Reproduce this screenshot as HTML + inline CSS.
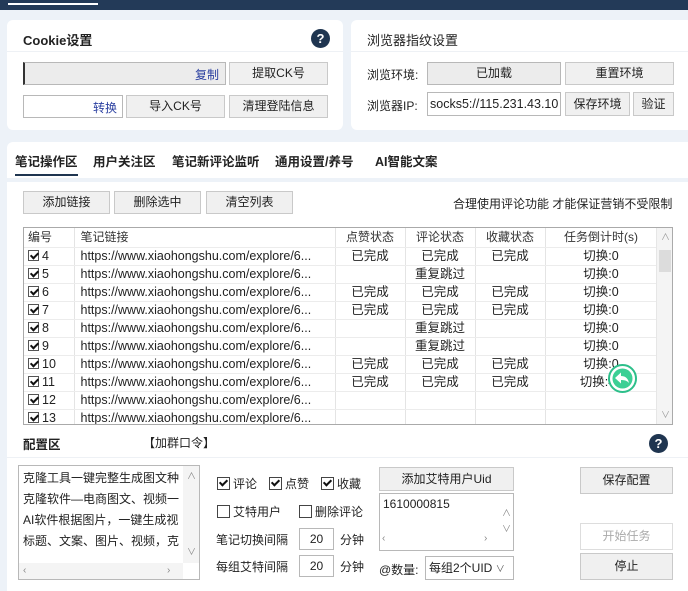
<!DOCTYPE html>
<html><head><meta charset="utf-8"><style>
*{box-sizing:border-box;margin:0;padding:0}
body{width:688px;height:591px;overflow:hidden;background:#edf2f8;font-family:"Liberation Sans","Noto Sans CJK SC",sans-serif;font-size:12px;color:#222;position:relative}
.a{position:absolute}
.panel{position:absolute;background:#fff;border-radius:6px}
.btn{position:absolute;background:#f0f0f0;border:1px solid #c9c9c9;text-align:center;font-size:12px;color:#222}
.inp{position:absolute;background:#fff;border:1px solid #b8b8b8;font-size:12px}
.hd{font-weight:bold;font-size:13px;color:#222}
.q{position:absolute;width:19px;height:19px;border-radius:50%;background:#1f3550;color:#fff;font-weight:bold;font-size:13px;text-align:center;line-height:19px}
table{border-collapse:collapse;font-size:12.5px}
td{height:18px;line-height:16px;border-right:1px solid #e4e4e4;border-bottom:1px solid #ececec;white-space:nowrap;overflow:hidden;text-align:center;padding:0}
.cb{display:inline-block;width:11px;height:11px;border:1px solid #555;background:#fff;vertical-align:-1px;position:relative;margin-right:3px}
.cb.k::after{content:"";position:absolute;left:3px;top:0;width:3px;height:6px;border:solid #111;border-width:0 2px 2px 0;transform:rotate(45deg)}
.ck{position:absolute;font-size:12px}
.ck .cb{width:13px;height:13px;border-color:#444;vertical-align:-2px}
</style></head><body>
<div class="a" style="left:0;top:0;width:688px;height:10px;background:#233a58"></div>
<div class="a" style="left:8px;top:3px;width:90px;height:2px;background:#fff"></div>

<div class="panel" style="left:7px;top:20px;width:336px;height:110px">
 <div class="a hd" style="left:16px;top:10px">Cookie设置</div>
 <div class="a" style="left:0;top:31px;width:336px;height:1px;background:#eef1f5"></div>
</div>
<div class="q" style="left:311px;top:29px">?</div>
<div class="inp" style="left:23px;top:62px;width:203px;height:23px;background:#ececec;border-left:2px solid #333"><span class="a" style="right:6px;top:3px;color:#2a3fa0">复制</span></div>
<div class="btn" style="left:229px;top:62px;width:99px;height:23px;line-height:21px">提取CK号</div>
<div class="inp" style="left:23px;top:95px;width:100px;height:23px"><span class="a" style="right:5px;top:3px;color:#2a3fa0">转换</span></div>
<div class="btn" style="left:126px;top:95px;width:99px;height:23px;line-height:21px">导入CK号</div>
<div class="btn" style="left:229px;top:95px;width:99px;height:23px;line-height:21px">清理登陆信息</div>

<div class="panel" style="left:351px;top:20px;width:345px;height:110px">
 <div class="a hd" style="left:16px;top:10px;font-weight:normal">浏览器指纹设置</div>
 <div class="a" style="left:0;top:31px;width:345px;height:1px;background:#eef1f5"></div>
</div>
<div class="a" style="left:367px;top:66px">浏览环境:</div>
<div class="inp" style="left:427px;top:62px;width:134px;height:23px;background:#ececec;text-align:center;line-height:21px">已加载</div>
<div class="btn" style="left:565px;top:62px;width:109px;height:23px;line-height:21px">重置环境</div>
<div class="a" style="left:367px;top:97px">浏览器IP:</div>
<div class="inp" style="left:427px;top:92px;width:134px;height:24px;line-height:22px;padding-left:2px;overflow:hidden;white-space:nowrap;font-size:12.5px">socks5://115.231.43.10</div>
<div class="btn" style="left:565px;top:92px;width:65px;height:24px;line-height:22px">保存环境</div>
<div class="btn" style="left:633px;top:92px;width:41px;height:24px;line-height:22px">验证</div>

<div class="panel" style="left:7px;top:142px;width:690px;height:36px;border-radius:6px 6px 0 0">
 <div class="a hd" style="left:8px;top:9px;font-size:12.5px">笔记操作区</div>
 <div class="a hd" style="left:86px;top:9px;font-size:12.5px">用户关注区</div>
 <div class="a hd" style="left:165px;top:9px;font-size:12.5px">笔记新评论监听</div>
 <div class="a hd" style="left:268px;top:9px;font-size:12.5px">通用设置/养号</div>
 <div class="a hd" style="left:368px;top:9px;font-size:12.5px">AI智能文案</div>
 <div class="a" style="left:8px;top:32px;width:63px;height:2px;background:#1f3550"></div>
</div>
<div class="panel" style="left:7px;top:182px;width:690px;height:250px;border-radius:0"></div>
<div class="btn" style="left:23px;top:191px;width:87px;height:23px;line-height:21px">添加链接</div>
<div class="btn" style="left:114px;top:191px;width:87px;height:23px;line-height:21px">删除选中</div>
<div class="btn" style="left:206px;top:191px;width:87px;height:23px;line-height:21px">清空列表</div>
<div class="a" style="left:453px;top:195px">合理使用评论功能 才能保证营销不受限制</div>

<div class="a" style="left:23px;top:227px;width:650px;height:198px;border:1px solid #aaa;background:#fff;overflow:hidden">
<table style="width:633px;table-layout:fixed">
<colgroup><col style="width:50px"><col style="width:261px"><col style="width:70px"><col style="width:70px"><col style="width:70px"><col style="width:112px"></colgroup>
<tr style="color:#333;font-size:12px"><td style="text-align:left;padding-left:4px;height:19px">编号</td><td style="text-align:left;padding-left:6px">笔记链接</td><td>点赞状态</td><td>评论状态</td><td>收藏状态</td><td>任务倒计时(s)</td></tr>
<tr><td style="text-align:left;padding-left:4px"><span class="cb k"></span>4</td><td style="text-align:left;padding-left:6px">https://www.xiaohongshu.com/explore/6...</td><td>已完成</td><td>已完成</td><td>已完成</td><td>切换:0</td></tr>
<tr><td style="text-align:left;padding-left:4px"><span class="cb k"></span>5</td><td style="text-align:left;padding-left:6px">https://www.xiaohongshu.com/explore/6...</td><td></td><td>重复跳过</td><td></td><td>切换:0</td></tr>
<tr><td style="text-align:left;padding-left:4px"><span class="cb k"></span>6</td><td style="text-align:left;padding-left:6px">https://www.xiaohongshu.com/explore/6...</td><td>已完成</td><td>已完成</td><td>已完成</td><td>切换:0</td></tr>
<tr><td style="text-align:left;padding-left:4px"><span class="cb k"></span>7</td><td style="text-align:left;padding-left:6px">https://www.xiaohongshu.com/explore/6...</td><td>已完成</td><td>已完成</td><td>已完成</td><td>切换:0</td></tr>
<tr><td style="text-align:left;padding-left:4px"><span class="cb k"></span>8</td><td style="text-align:left;padding-left:6px">https://www.xiaohongshu.com/explore/6...</td><td></td><td>重复跳过</td><td></td><td>切换:0</td></tr>
<tr><td style="text-align:left;padding-left:4px"><span class="cb k"></span>9</td><td style="text-align:left;padding-left:6px">https://www.xiaohongshu.com/explore/6...</td><td></td><td>重复跳过</td><td></td><td>切换:0</td></tr>
<tr><td style="text-align:left;padding-left:4px"><span class="cb k"></span>10</td><td style="text-align:left;padding-left:6px">https://www.xiaohongshu.com/explore/6...</td><td>已完成</td><td>已完成</td><td>已完成</td><td>切换:0</td></tr>
<tr><td style="text-align:left;padding-left:4px"><span class="cb k"></span>11</td><td style="text-align:left;padding-left:6px">https://www.xiaohongshu.com/explore/6...</td><td>已完成</td><td>已完成</td><td>已完成</td><td>切换:40</td></tr>
<tr><td style="text-align:left;padding-left:4px"><span class="cb k"></span>12</td><td style="text-align:left;padding-left:6px">https://www.xiaohongshu.com/explore/6...</td><td></td><td></td><td></td><td></td></tr>
<tr><td style="text-align:left;padding-left:4px"><span class="cb k"></span>13</td><td style="text-align:left;padding-left:6px">https://www.xiaohongshu.com/explore/6...</td><td></td><td></td><td></td><td></td></tr>
</table>
<div class="a" style="right:0;top:0;width:16px;height:196px;background:#f4f4f4;border-left:1px solid #e6e6e6">
 <div class="a" style="left:4px;top:2px;color:#999;font-size:9px">∧</div>
 <div class="a" style="left:2px;top:22px;width:12px;height:22px;background:#dcdcdc"></div>
 <div class="a" style="left:4px;top:180px;color:#999;font-size:9px">∨</div>
</div>
</div>
<div class="a" style="left:608px;top:364px;width:29px;height:29px;border-radius:50%;border:2px solid #2dbf8a;background:#fff"><svg width="25" height="25" viewBox="0 0 25 25"><circle cx="12.5" cy="12.5" r="10" fill="#3ccf95"/><path d="M5 12 L11 6.5 V10 C15 10 18 12 19 17 C17 14.5 14 14 11 14 V17.5 Z" fill="#fff"/></svg></div>

<div class="a" style="left:7px;top:432px;width:681px;height:159px;background:#fff"></div>
<div class="a hd" style="left:23px;top:434px;font-size:12.5px">配置区</div>
<div class="a" style="left:143px;top:434px">【加群口令】</div>
<div class="q" style="left:649px;top:434px">?</div>
<div class="a" style="left:7px;top:457px;width:681px;height:1px;background:#eef1f5"></div>

<div class="inp" style="left:18px;top:465px;width:182px;height:115px;line-height:21px;padding:2px 0 0 4px;overflow:hidden;white-space:nowrap">克隆工具一键完整生成图文种<br>克隆软件—电商图文、视频一<br>AI软件根据图片，一键生成视<br>标题、文案、图片、视频，克
 <div class="a" style="right:0;top:0;width:16px;height:97px;background:#f4f4f4;color:#888;font-size:9px"><span class="a" style="left:4px;top:0">∧</span><span class="a" style="left:4px;top:76px">∨</span></div>
 <div class="a" style="left:0;bottom:0;width:164px;height:16px;background:#f4f4f4;color:#888;font-size:10px"><span class="a" style="left:4px;top:-3px">‹</span><span class="a" style="left:148px;top:-3px">›</span></div>
</div>

<div class="ck" style="left:217px;top:475px"><span class="cb k"></span>评论</div>
<div class="ck" style="left:269px;top:475px"><span class="cb k"></span>点赞</div>
<div class="ck" style="left:321px;top:475px"><span class="cb k"></span>收藏</div>
<div class="ck" style="left:217px;top:503px"><span class="cb"></span>艾特用户</div>
<div class="ck" style="left:299px;top:503px"><span class="cb"></span>删除评论</div>
<div class="a" style="left:216px;top:531px">笔记切换间隔</div>
<div class="inp" style="left:299px;top:528px;width:35px;height:22px;text-align:center;line-height:20px">20</div>
<div class="a" style="left:340px;top:531px">分钟</div>
<div class="a" style="left:216px;top:558px">每组艾特间隔</div>
<div class="inp" style="left:299px;top:555px;width:35px;height:22px;text-align:center;line-height:20px">20</div>
<div class="a" style="left:340px;top:558px">分钟</div>

<div class="btn" style="left:379px;top:467px;width:135px;height:24px;line-height:22px">添加艾特用户Uid</div>
<div class="inp" style="left:379px;top:493px;width:135px;height:58px;padding:3px 0 0 3px">1610000815
 <div class="a" style="right:0;top:0;width:14px;height:56px;color:#888;font-size:9px"><span class="a" style="left:3px;top:12px">∧</span><span class="a" style="left:3px;top:28px">∨</span></div>
 <div class="a" style="left:0;bottom:0;width:119px;height:14px;color:#888;font-size:10px"><span class="a" style="left:2px;top:-3px">‹</span><span class="a" style="left:104px;top:-3px">›</span></div>
</div>
<div class="a" style="left:379px;top:561px">@数量:</div>
<div class="inp" style="left:425px;top:556px;width:89px;height:24px;line-height:22px;padding-left:3px">每组2个UID <span style="font-size:9px;color:#555">∨</span></div>

<div class="btn" style="left:580px;top:467px;width:93px;height:27px;line-height:25px">保存配置</div>
<div class="btn" style="left:580px;top:523px;width:93px;height:27px;line-height:25px;background:#fff;border-color:#ddd;color:#aaa">开始任务</div>
<div class="btn" style="left:580px;top:553px;width:93px;height:27px;line-height:25px">停止</div>
</body></html>
